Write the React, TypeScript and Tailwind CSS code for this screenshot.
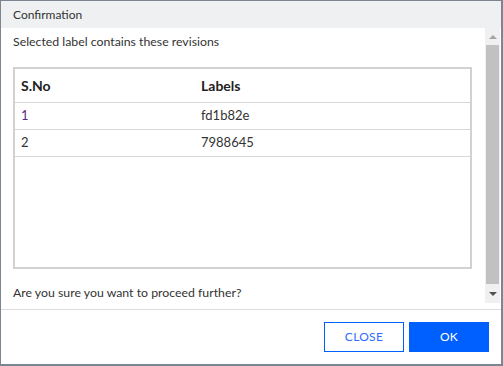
import React from 'react';

const rows = [
  { no: '1', label: 'fd1b82e' },
  { no: '2', label: '7988645' },
];

function Scrollbar() {
  return (
    <div className="flex w-[15px] flex-col items-center bg-[#f0f0f0]">
      <div className="flex h-[17px] w-full items-center justify-center">
        <div className="h-0 w-0 border-x-[4px] border-b-[4px] border-x-transparent border-b-[#a3a3a3]" />
      </div>
      <div className="h-[239px] w-[13px] bg-[#c1c1c1]" />
      <div className="flex flex-1 w-full items-center justify-center">
        <div className="h-0 w-0 border-x-[4px] border-t-[4px] border-x-transparent border-t-[#505050]" />
      </div>
    </div>
  );
}

export default function App() {
  return (
    <div
      className="h-[366px] w-[503px] bg-[#7e8592] pl-px pt-px text-[#333]"
      style={{ fontFamily: 'Lato, "Open Sans", sans-serif' }}
    >
      <div className="flex h-[363px] w-[500px] flex-col bg-white">
        <div className="flex h-[27px] items-center bg-[#eff0f2] px-[12px] text-[12px]">
          Confirmation
        </div>
        <div className="flex h-[281px]">
          <div className="flex flex-1 flex-col pl-[12px] pr-[13px] pt-[6px]">
            <div className="text-[12.3px] leading-[16px]">
              Selected label contains these revisions
            </div>
            <div className="mt-[17px] h-[202px] border-2 border-[#d2d2d2] text-[13px]">
              <div className="flex h-[34px] items-center border-b border-[#d8d8d8] text-[14px] font-bold text-[#222]">
                <div className="w-[186px] pl-[6px]">S.No</div>
                <div>Labels</div>
              </div>
              {rows.map((r) => (
                <div
                  key={r.no}
                  className="flex h-[27px] items-center border-b border-[#d8d8d8]"
                >
                  <div
                    className={`w-[186px] pl-[6px] ${r.no === '1' ? 'text-[#5b2a86]' : ''}`}
                  >
                    {r.no}
                  </div>
                  <div>{r.label}</div>
                </div>
              ))}
            </div>
            <div className="mt-[16px] text-[12.3px] leading-[16px]">
              Are you sure you want to proceed further?
            </div>
          </div>
          <div className="flex h-[275px] pr-px">
            <Scrollbar />
          </div>
        </div>
        <div className="flex flex-1 justify-end gap-[5px] border-t border-[#dcdcdc] pr-[12px] pt-[12px]">
          <button className="h-[30px] w-[80px] border border-[#0060ff] bg-white text-[12px] tracking-wide text-[#2f6bff]">
            CLOSE
          </button>
          <button className="h-[30px] w-[80px] bg-[#005fff] text-[12px] tracking-wide text-white">
            OK
          </button>
        </div>
      </div>
    </div>
  );
}
